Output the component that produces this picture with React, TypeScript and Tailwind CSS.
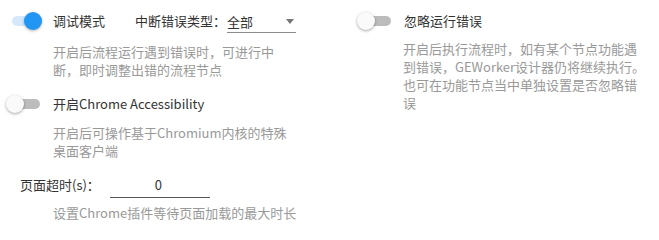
import React from "react";

function Switch({ on }: { on: boolean }) {
  return (
    <div className="relative w-[53px] h-[38px] shrink-0">
      <div
        className={
          on
            ? "absolute left-[12px] top-[14px] w-[28px] h-[10px] rounded-full bg-[#d6e8fb]"
            : "absolute left-[12px] top-[14px] w-[28px] h-[10px] rounded-full bg-[#bcbcbc]"
        }
      />
      <div
        className={
          on
            ? "absolute left-[24px] top-[10px] w-[18px] h-[18px] rounded-full bg-[#2196f3] shadow-[0_1px_3px_rgba(0,0,0,0.3)]"
            : "absolute left-[6px] top-[10px] w-[18px] h-[18px] rounded-full bg-[#fafafa] shadow-[0_1px_3px_rgba(0,0,0,0.35)]"
        }
      />
    </div>
  );
}

export default function App() {
  return (
    <div
      className="w-[659px] h-[237px] bg-white text-[13px] leading-[18px] text-[#333] overflow-hidden"
      style={{ fontFamily: '"Noto Sans CJK SC", "Noto Sans", sans-serif' }}
    >
      <div className="flex">
        <div className="w-[351px] shrink-0">
          <div className="flex items-center h-[38px] mt-[2px]">
            <Switch on={true} />
            <span>调试模式</span>
            <span className="ml-[30px]">中断错误类型：</span>
            <div className="ml-[1px] w-[69px] h-[22px] mt-[2px] border-b border-[#8c8c8c] flex items-center justify-between">
              <span>全部</span>
              <svg width="8" height="5" viewBox="0 0 8 5" className="mr-[2px]">
                <path d="M0 0 L8 0 L4 5 Z" fill="#777" />
              </svg>
            </div>
          </div>
          <div className="pl-[53px] mt-[3px] w-[286px] text-[#999]">
            开启后流程运行遇到错误时，可进行中断，即时调整出错的流程节点
          </div>
          <div className="flex items-center h-[38px] mt-[6px]">
            <Switch on={false} />
            <span>开启Chrome Accessibility</span>
          </div>
          <div className="pl-[53px] mt-[1px] w-[293px] text-[#999]">
            开启后可操作基于Chromium内核的特殊桌面客户端
          </div>
          <div className="flex items-end mt-[16px] pl-[20px]">
            <span className="leading-[18px] mb-[4px]">页面超时(s)：</span>
            <div className="ml-[10px] w-[100px] h-[22px] border-b border-[#555] text-center leading-[18px] pr-[3px]">
              0
            </div>
          </div>
          <div className="pl-[53px] mt-[6px] text-[#999]">
            设置Chrome插件等待页面加载的最大时长
          </div>
        </div>
        <div className="flex-1">
          <div className="flex items-center h-[38px] mt-[2px]">
            <Switch on={false} />
            <span>忽略运行错误</span>
          </div>
          <div className="pl-[52px] w-[298px] text-[#999]">
            开启后执行流程时，如有某个节点功能遇到错误，GEWorker设计器仍将继续执行。也可在功能节点当中单独设置是否忽略错误
          </div>
        </div>
      </div>
    </div>
  );
}
